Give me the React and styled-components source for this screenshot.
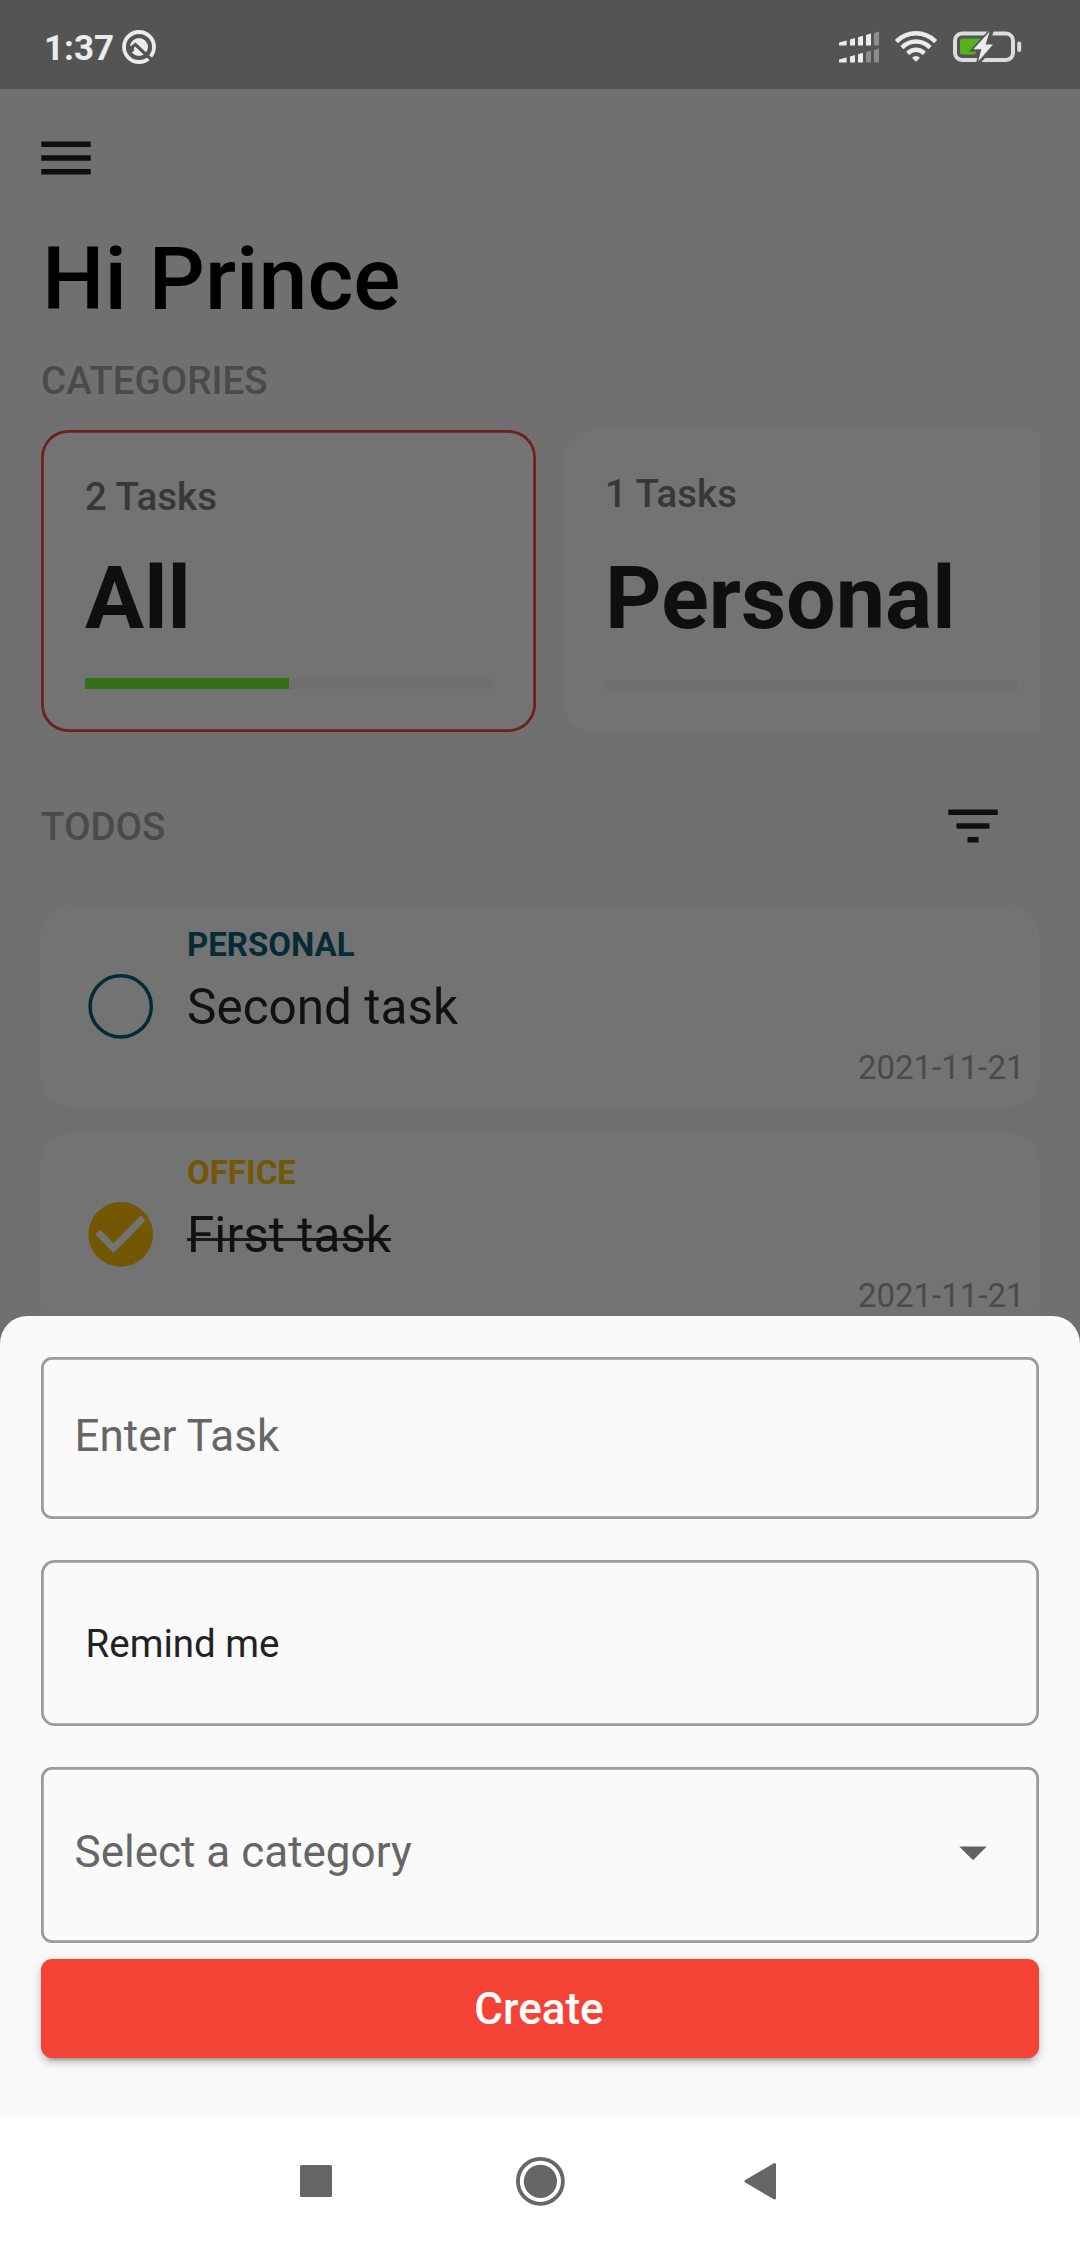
import React from 'react';
import styled, { createGlobalStyle } from 'styled-components';

const GlobalStyle = createGlobalStyle`
  * { box-sizing: border-box; }
  body { margin: 0; background: #707070; }
`;

const Screen = styled.div`
  position: relative;
  width: 1080px;
  height: 2246px;
  overflow: hidden;
  background: #707070;
  font-family: Roboto, "Liberation Sans", sans-serif;
`;

const StatusBar = styled.header`
  display: flex;
  align-items: center;
  justify-content: space-between;
  height: 89px;
  padding: 0 58px 0 44px;
  background: #545454;
`;

const StatusGroup = styled.div`
  display: flex;
  align-items: center;
  gap: ${(p) => p.$gap}px;
  padding-top: 5px;
`;

const Clock = styled.span`
  padding-top: 3px;
  font-size: 35px;
  font-weight: 700;
  line-height: 42px;
  color: #ebebeb;
`;

const Page = styled.main`
  display: flex;
  flex-direction: column;
  padding: 36px 41px 0;
`;

const MenuIcon = styled.svg`
  display: block;
  width: 66px;
  height: 66px;
  margin-left: -8px;
  fill: #0f0f0f;
`;

const Greeting = styled.h1`
  margin: 36px 0 27px 1px;
  font-size: 88px;
  font-weight: 500;
  line-height: 104px;
  color: #000;
`;

const SectionLabel = styled.h2`
  margin: 0;
  font-size: 38.5px;
  font-weight: 500;
  line-height: 46px;
  color: #4a4a4a;
`;

const CategoryList = styled.div`
  display: flex;
  gap: 28px;
  margin-top: 26px;
  overflow: hidden;
`;

const CategoryCard = styled.article`
  display: flex;
  flex: none;
  flex-direction: column;
  justify-content: space-between;
  width: 495px;
  height: 302px;
  padding: ${(p) => (p.$selected ? '44px 43px 43px 44px' : '41px 42px 41px 41px')};
  border-radius: 27.5px;
  background: #737373;
  box-shadow: ${(p) => (p.$selected ? 'inset 0 0 0 2.75px #6c221c' : 'none')};
`;

const TaskCount = styled.span`
  font-size: 38.5px;
  font-weight: 500;
  line-height: 46px;
  color: #383838;
`;

const CategoryName = styled.span`
  padding-bottom: 3px;
  font-size: 88px;
  font-weight: 700;
  line-height: 101px;
  color: #0f0f0f;
`;

const Track = styled.div`
  height: 11px;
  background: #6f6f6f;
`;

const Progress = styled.div`
  height: 100%;
  background: #337017;
`;

const TodoHeader = styled.div`
  display: flex;
  align-items: center;
  justify-content: space-between;
  height: 132px;
  margin: 28px 0 14px;
  padding-right: 33px;
`;

const TodoHeading = styled(SectionLabel)`
  padding-top: 2px;
`;

const FilterIcon = styled.svg`
  width: 66px;
  height: 66px;
  fill: #0f0f0f;
`;

const TodoList = styled.div`
  display: flex;
  flex-direction: column;
  gap: 28px;
`;

const TodoCard = styled.article`
  display: flex;
  height: 200px;
  padding: 19px 14.5px 19px 46px;
  border-radius: 27.5px;
  background: #737373;
`;

const Check = styled.svg`
  width: 66px;
  height: 66px;
  margin: 48px 34px 0 0;
`;

const TodoBody = styled.div`
  display: flex;
  flex: 1;
  flex-direction: column;
`;

const TodoCategory = styled.span`
  font-size: 33px;
  font-weight: 700;
  line-height: 39px;
  color: ${(p) => p.$color};
`;

const TodoTitle = styled.span`
  position: relative;
  align-self: flex-start;
  margin: 14px 0 12px;
  font-size: 49.5px;
  line-height: 58px;
  color: #111;

  &::after {
    content: '';
    display: ${(p) => (p.$done ? 'block' : 'none')};
    position: absolute;
    left: 0;
    right: 0;
    top: 32px;
    height: 3px;
    background: rgba(15, 15, 15, 0.9);
  }
`;

const TodoDate = styled.span`
  align-self: flex-end;
  font-size: 33px;
  line-height: 39px;
  color: #4a4a4a;
`;

const Sheet = styled.section`
  position: absolute;
  left: 0;
  right: 0;
  bottom: 130px;
  display: flex;
  flex-direction: column;
  gap: 41px;
  height: 800px;
  padding: 41px 41px 0;
  border-radius: 27.5px 27.5px 0 0;
  background: #fafafa;
`;

const Field = styled.div`
  display: flex;
  align-items: center;
  justify-content: space-between;
  height: ${(p) => p.$height}px;
  padding: 0 ${(p) => p.$inset}px ${(p) => p.$lift || 0}px;
  border-radius: ${(p) => p.$radius}px;
  box-shadow: inset 0 0 0 2.75px #9b9b9b;
  font-size: ${(p) => p.$size}px;
  color: ${(p) => p.$color};
`;

const DropArrow = styled.svg`
  width: 66px;
  height: 66px;
  fill: #616161;
`;

const CreateButton = styled.button`
  height: 99px;
  margin-top: -25px;
  padding: 0 2px 0 0;
  border: 0;
  border-radius: 11px;
  background: #f44336;
  box-shadow: 0 8px 3px -6px rgba(0, 0, 0, 0.2), 0 5px 6px rgba(0, 0, 0, 0.14), 0 3px 14px rgba(0, 0, 0, 0.12);
  font-family: inherit;
  font-size: 44px;
  font-weight: 500;
  line-height: 52px;
  color: #fff;
`;

const NavBar = styled.nav`
  position: absolute;
  left: 0;
  right: 0;
  bottom: 0;
  display: flex;
  align-items: center;
  justify-content: center;
  gap: 168px;
  height: 130px;
  background: #fff;
`;

const NavIcon = styled.svg`
  width: 56px;
  height: 56px;
  fill: #666;
`;

const categories = [
  { name: 'All', count: 2, progress: 50, selected: true },
  { name: 'Personal', count: 1, progress: 0, selected: false },
];

const todos = [
  { category: 'PERSONAL', title: 'Second task', date: '2021-11-21', color: '#072b36', done: false },
  { category: 'OFFICE', title: 'First task', date: '2021-11-21', color: '#735702', done: true },
];

function NotificationGlyph() {
  return (
    <svg width="34" height="34" viewBox="0 0 34 34">
      <circle cx="17" cy="17" r="15" fill="none" stroke="#ebebeb" strokeWidth="3.8" />
      <circle cx="17" cy="17" r="9" fill="#ebebeb" />
      <path d="M7 19.6 L13.4 14.6 L31 31" fill="none" stroke="#545454" strokeWidth="3.2" />
      <path d="M7 19 L12 16 L12 20.5 L8.5 24Z" fill="#545454" />
    </svg>
  );
}

function SignalGlyph() {
  return (
    <svg width="42" height="32" viewBox="0 0 42 32">
      <g fill="#ebebeb">
        <path d="M1 11.6 L8.6 9.4 V14.4 H1Z M12 8.4 L17 7 V14.4 H12Z M20 6.2 L25 4.8 V14.4 H20Z M28 4 L33 2.4 V14.4 H28Z" />
        <path d="M1 28.6 L8.6 26.4 V31.4 H1Z M12 25.4 L17 24 V31.4 H12Z M20 23.2 L25 21.8 V31.4 H20Z" />
      </g>
      <g fill="#8c8c8c">
        <path d="M36 2 L41 0.4 V14.4 H36Z M28 21 L33 19.4 V31.4 H28Z M36 19 L41 17.4 V31.4 H36Z" />
      </g>
    </svg>
  );
}

function WifiGlyph() {
  return (
    <svg width="42" height="32" viewBox="0 0 42 32" fill="none" stroke="#ebebeb" strokeWidth="4.5">
      <path d="M1.4 10.6 C12.5 -0.5 29.5 -0.5 40.6 10.6" />
      <path d="M7 16.6 C15 8.6 27 8.6 35 16.6" />
      <path d="M12.6 22.4 C17.5 17.6 24.5 17.6 29.4 22.4" />
      <path d="M17 26.8 Q21 23.2 25 26.8 L21 30.8Z" fill="#ebebeb" stroke="none" />
    </svg>
  );
}

function BatteryGlyph() {
  return (
    <svg width="69" height="32" viewBox="0 0 69 32">
      <rect x="2" y="2.5" width="58" height="26.5" rx="7" fill="none" stroke="#dcdcdc" strokeWidth="4" />
      <rect x="64.2" y="10.5" width="4" height="10.5" rx="2" fill="#dcdcdc" />
      <path d="M9 7.5 H29 L22 23.5 H9 Q7 23.5 7 21.5 V9.5 Q7 7.5 9 7.5Z" fill="#56b01f" />
      <path d="M35 0 L16 20.6 H26 L23 32 H27.6 L43.6 13.6 H36.5 L40.6 0Z" fill="#545454" />
      <path d="M36.6 0.6 L20.4 18.2 H28.4 L25 30.8 L40 13.4 H32.6Z" fill="#ebebeb" />
    </svg>
  );
}

function CheckCircle({ color, done }) {
  return (
    <Check viewBox="0 0 66 66">
      {done ? (
        <>
          <circle cx="33.7" cy="33.4" r="32.3" fill={color} />
          <path d="M10.8 31.2 L26.6 47.2 L56.2 16.8" fill="none" stroke="#737373" strokeWidth="6.8" />
        </>
      ) : (
        <circle cx="33.7" cy="33.4" r="30.6" fill="none" stroke={color} strokeWidth="3.5" />
      )}
    </Check>
  );
}

export default function App() {
  return (
    <Screen>
      <GlobalStyle />
      <StatusBar>
        <StatusGroup $gap={8}>
          <Clock>1:37</Clock>
          <NotificationGlyph />
        </StatusGroup>
        <StatusGroup $gap={15.7}>
          <SignalGlyph />
          <WifiGlyph />
          <BatteryGlyph />
        </StatusGroup>
      </StatusBar>

      <Page>
        <MenuIcon viewBox="0 0 24 24">
          <path d="M3 18h18v-2H3v2zm0-5h18v-2H3v2zm0-7v2h18V6H3z" />
        </MenuIcon>
        <Greeting>Hi Prince</Greeting>
        <SectionLabel>CATEGORIES</SectionLabel>
        <CategoryList>
          {categories.map((c) => (
            <CategoryCard key={c.name} $selected={c.selected}>
              <TaskCount>{c.count} Tasks</TaskCount>
              <CategoryName>{c.name}</CategoryName>
              <Track>
                <Progress style={{ width: `${c.progress}%` }} />
              </Track>
            </CategoryCard>
          ))}
        </CategoryList>
        <TodoHeader>
          <TodoHeading>TODOS</TodoHeading>
          <FilterIcon viewBox="0 0 24 24">
            <path d="M10 18h4v-2h-4v2zM3 6v2h18V6H3zm3 7h12v-2H6v2z" />
          </FilterIcon>
        </TodoHeader>
        <TodoList>
          {todos.map((t) => (
            <TodoCard key={t.title}>
              <CheckCircle color={t.color} done={t.done} />
              <TodoBody>
                <TodoCategory $color={t.color}>{t.category}</TodoCategory>
                <TodoTitle $done={t.done}>{t.title}</TodoTitle>
                <TodoDate>{t.date}</TodoDate>
              </TodoBody>
            </TodoCard>
          ))}
        </TodoList>
      </Page>

      <Sheet>
        <Field $height={162} $inset={33.5} $lift={4} $radius={11} $size={44} $color="#666">
          Enter Task
        </Field>
        <Field $height={166} $inset={44.5} $radius={13.75} $size={38.5} $color="#222">
          Remind me
        </Field>
        <Field $height={176} $inset={33.5} $lift={6} $radius={11} $size={44} $color="#666">
          Select a category
          <DropArrow viewBox="0 0 24 24">
            <path d="M7 10l5 5 5-5z" />
          </DropArrow>
        </Field>
        <CreateButton>Create</CreateButton>
      </Sheet>

      <NavBar>
        <NavIcon viewBox="0 0 56 56">
          <rect x="12" y="12" width="32" height="32" rx="1.5" />
        </NavIcon>
        <NavIcon viewBox="0 0 56 56">
          <circle cx="28.4" cy="28.3" r="22.5" fill="none" stroke="#666" strokeWidth="3.8" />
          <circle cx="28.4" cy="28.3" r="16.6" />
        </NavIcon>
        <NavIcon viewBox="0 0 56 56">
          <path d="M10 28.3 L38.5 11.5 V45Z" stroke="#666" strokeWidth="3" strokeLinejoin="round" />
        </NavIcon>
      </NavBar>
    </Screen>
  );
}
